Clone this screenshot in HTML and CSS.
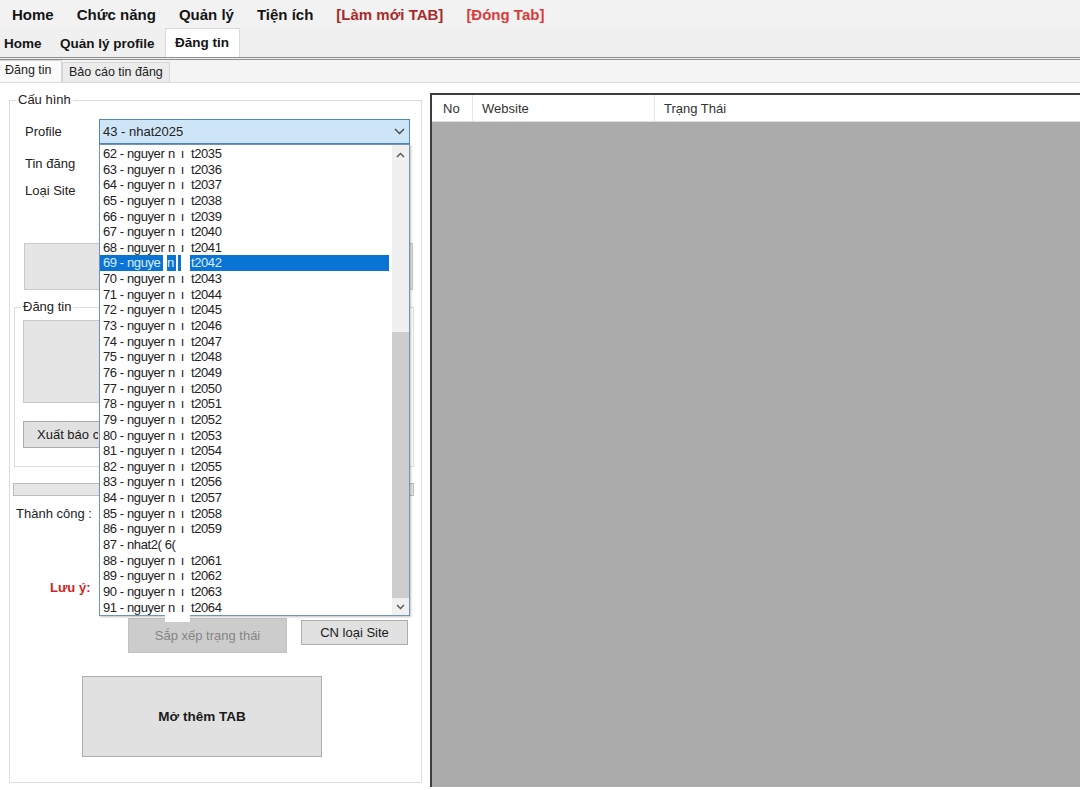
FILE: index.html
```html
<!DOCTYPE html>
<html lang="vi">
<head>
<meta charset="utf-8">
<title>Đăng tin</title>
<link rel="stylesheet" href="styles.css">
</head>
<body>
<div class="menubar">
  <span>Home</span>
  <span>Chức năng</span>
  <span>Quản lý</span>
  <span>Tiện ích</span>
  <span class="red1">[Làm mới TAB]</span>
  <span class="red2">[Đóng Tab]</span>
</div>
<div class="tabs1">
  <div class="t1 t1-home">Home</div>
  <div class="t1 t1-prof">Quản lý profile</div>
  <div class="t1 t1-post active">Đăng tin</div>
</div>
<div class="tabs2">
  <div class="t2 active">Đăng tin</div>
  <div class="t2">Bảo cáo tin đăng</div>
</div>
<div class="content">
  <div class="left">
    <div class="group outer">
      <span class="gtitle">Cấu hình</span>
      <div class="row row1">
        <span class="lbl">Profile</span>
        <div class="combo">
          <span class="combo-val">43 - nhat2025</span>
          <svg class="chev" width="11" height="7" viewBox="0 0 11 7"><polyline points="1,1 5.5,5.5 10,1" fill="none" stroke="#444" stroke-width="1.3"/></svg>
          <div class="dropdown">
            <div class="items">
              <div class="it"><span class="a">62 - nguyer</span><span class="b">n ı</span><span class="c">t2035</span></div>
              <div class="it"><span class="a">63 - nguyer</span><span class="b">n ı</span><span class="c">t2036</span></div>
              <div class="it"><span class="a">64 - nguyer</span><span class="b">n ı</span><span class="c">t2037</span></div>
              <div class="it"><span class="a">65 - nguyer</span><span class="b">n ı</span><span class="c">t2038</span></div>
              <div class="it"><span class="a">66 - nguyer</span><span class="b">n ı</span><span class="c">t2039</span></div>
              <div class="it"><span class="a">67 - nguyer</span><span class="b">n ı</span><span class="c">t2040</span></div>
              <div class="it"><span class="a">68 - nguyer</span><span class="b">n ı</span><span class="c">t2041</span></div>
              <div class="it sel"><span class="sa">69 - nguye</span><span class="wg w1"></span><span class="sn">n</span><span class="wg w2"></span><span class="s3"></span><span class="wg w3"></span><span class="sc">t2042</span></div>
              <div class="it"><span class="a">70 - nguyer</span><span class="b">n ı</span><span class="c">t2043</span></div>
              <div class="it"><span class="a">71 - nguyer</span><span class="b">n ı</span><span class="c">t2044</span></div>
              <div class="it"><span class="a">72 - nguyer</span><span class="b">n ı</span><span class="c">t2045</span></div>
              <div class="it"><span class="a">73 - nguyer</span><span class="b">n ı</span><span class="c">t2046</span></div>
              <div class="it"><span class="a">74 - nguyer</span><span class="b">n ı</span><span class="c">t2047</span></div>
              <div class="it"><span class="a">75 - nguyer</span><span class="b">n ı</span><span class="c">t2048</span></div>
              <div class="it"><span class="a">76 - nguyer</span><span class="b">n ı</span><span class="c">t2049</span></div>
              <div class="it"><span class="a">77 - nguyer</span><span class="b">n ı</span><span class="c">t2050</span></div>
              <div class="it"><span class="a">78 - nguyer</span><span class="b">n ı</span><span class="c">t2051</span></div>
              <div class="it"><span class="a">79 - nguyer</span><span class="b">n ı</span><span class="c">t2052</span></div>
              <div class="it"><span class="a">80 - nguyer</span><span class="b">n ı</span><span class="c">t2053</span></div>
              <div class="it"><span class="a">81 - nguyer</span><span class="b">n ı</span><span class="c">t2054</span></div>
              <div class="it"><span class="a">82 - nguyer</span><span class="b">n ı</span><span class="c">t2055</span></div>
              <div class="it"><span class="a">83 - nguyer</span><span class="b">n ı</span><span class="c">t2056</span></div>
              <div class="it"><span class="a">84 - nguyer</span><span class="b">n ı</span><span class="c">t2057</span></div>
              <div class="it"><span class="a">85 - nguyer</span><span class="b">n ı</span><span class="c">t2058</span></div>
              <div class="it"><span class="a">86 - nguyer</span><span class="b">n ı</span><span class="c">t2059</span></div>
              <div class="it"><span class="a">87 - nhat2( 6(</span></div>
              <div class="it"><span class="a">88 - nguyer</span><span class="b">n ı</span><span class="c">t2061</span></div>
              <div class="it"><span class="a">89 - nguyer</span><span class="b">n ı</span><span class="c">t2062</span></div>
              <div class="it"><span class="a">90 - nguyer</span><span class="b">n ı</span><span class="c">t2063</span></div>
              <div class="it"><span class="a">91 - nguyer</span><span class="b">n ı</span><span class="c">t2064</span></div>
            </div>
            <div class="sbar">
              <div class="sbtn"><svg width="9" height="6" viewBox="0 0 9 6"><polyline points="1,5 4.5,1.5 8,5" fill="none" stroke="#555" stroke-width="1.4"/></svg></div>
              <div class="track"><div class="thumb"></div></div>
              <div class="sbtn"><svg width="9" height="6" viewBox="0 0 9 6"><polyline points="1,1 4.5,4.5 8,1" fill="none" stroke="#555" stroke-width="1.4"/></svg></div>
            </div>
            <div class="mask"></div>
          </div>
        </div>
      </div>
      <div class="row row2"><span class="lbl">Tin đăng</span></div>
      <div class="row row3"><span class="lbl">Loại Site</span></div>
      <div class="graybox box1"></div>
      <div class="group inner">
        <span class="gtitle">Đăng tin</span>
        <div class="graybox box2"></div>
        <div class="btn btn-export"><span class="clip">Xuất báo cáo</span></div>
      </div>
      <div class="progress"></div>
      <div class="status">Thành công :</div>
      <div class="note">Lưu ý:</div>
      <div class="btnrow">
        <div class="btn btn-sort">Sắp xếp trạng thái</div>
        <div class="btn btn-site">CN loại Site</div>
      </div>
      <div class="btn btn-tab">Mở thêm TAB</div>
    </div>
  </div>
  <div class="right">
    <div class="lvhead">
      <div class="col col-no">No</div>
      <div class="col col-web">Website</div>
      <div class="col col-st">Trạng Thái</div>
    </div>
  </div>
</div>
</body>
</html>
```
FILE: styles.css
```css
* { box-sizing: border-box; }
body {
  margin: 0;
  width: 1080px;
  height: 790px;
  overflow: hidden;
  background: #fff;
  color: #1a1a1a;
  font-family: "Liberation Sans", Arial, sans-serif;
}

/* top menu */
.menubar {
  height: 28px;
  background: #f2f2f2;
  display: flex;
  align-items: center;
  gap: 23px;
  padding-left: 12px;
  font-weight: bold;
  font-size: 15px;
  color: #151515;
}
.menubar .red1 { color: #a82a2a; }
.menubar .red2 { color: #d83c3c; }

/* first tab strip */
.tabs1 {
  height: 32px;
  background: #f0f0f0;
  display: flex;
  align-items: flex-end;
  border-bottom: 3px double #8e8e8e;
}
.t1 {
  height: 27px;
  line-height: 27px;
  font-weight: bold;
  font-size: 13.5px;
  color: #151515;
}
.t1-home { width: 55px; padding-left: 4px; }
.t1-prof { width: 110px; padding-left: 5px; }
.t1-post { width: 75px; padding-left: 9px; }
.t1.active {
  height: 29px;
  background: #fff;
  border: 1px solid #dadada;
  border-bottom: none;
}

/* second tab strip */
.tabs2 {
  height: 23px;
  background: #f4f4f4;
  display: flex;
  align-items: flex-end;
  border-bottom: 1px solid #d9d9d9;
}
.t2 {
  height: 20px;
  line-height: 19px;
  padding: 0 6px;
  font-size: 12.5px;
  color: #222;
  background: #ececec;
  border: 1px solid #d6d6d6;
  border-bottom: none;
}
.t2.active {
  height: 22px;
  width: 62px;
  padding: 0 5px;
  background: #fafafa;
  border-left: none;
}

/* content */
.content {
  display: flex;
  height: 707px;
}
.left {
  width: 430px;
  flex: none;
}
.group {
  position: relative;
  border: 1px solid #dcdcdc;
}
.gtitle {
  position: absolute;
  top: -9px;
  left: 6px;
  padding: 0 2px;
  background: #fff;
  font-size: 13px;
  line-height: 16px;
  color: #222;
}
.outer {
  margin: 17px 0 0 9px;
  width: 413px;
  height: 683px;
}
.row {
  display: flex;
  align-items: center;
  height: 25px;
  padding-left: 15px;
}
.row1 { margin-top: 18px; }
.row2 { margin-top: 7px; }
.row3 { margin-top: 2px; }
.lbl {
  width: 74px;
  flex: none;
  font-size: 13px;
  color: #222;
}

/* combobox */
.combo {
  position: relative;
  width: 311px;
  height: 25px;
  background: #cde5f7;
  border: 1px solid #4f88bb;
  display: flex;
  align-items: center;
  padding-left: 3px;
}
.combo-val {
  flex: 1;
  font-size: 13px;
  color: #222;
}
.chev { margin-right: 4px; }

.dropdown {
  position: absolute;
  top: 24px;
  left: -1px;
  width: 311px;
  height: 472px;
  background: #fff;
  border: 1px solid #6f95b8;
  box-shadow: 1px 1px 2px rgba(0, 0, 0, 0.25);
  display: flex;
  z-index: 5;
}
.items {
  width: 292px;
  padding-top: 1px;
}
.it {
  display: flex;
  height: 15.65px;
  line-height: 15.65px;
  font-size: 13px;
  letter-spacing: -0.4px;
  color: #222;
  padding-left: 3px;
  width: 289px;
  white-space: nowrap;
}
.it .a { flex: 0 0 65px; }
.it .b { flex: 0 0 23px; letter-spacing: 1px; }
.it .c { flex: 1; }
.it.sel {
  background: #0a74d4;
  color: #d8ecff;
  padding-left: 0;
}
.sel .sa { flex: 0 0 63px; padding-left: 3px; overflow: hidden; }
.sel .wg { background: #fff; }
.sel .w1 { flex: 0 0 4px; }
.sel .sn { flex: 0 0 9px; }
.sel .w2 { flex: 0 0 2px; }
.sel .s3 { flex: 0 0 3px; }
.sel .w3 { flex: 0 0 9px; }
.sel .sc { flex: 1; padding-left: 1px; }

.sbar {
  width: 17px;
  display: flex;
  flex-direction: column;
  background: #f0f0f0;
}
.sbtn {
  height: 17px;
  display: flex;
  align-items: center;
  justify-content: center;
}
.sbar .sbtn:first-child { padding-top: 3px; }
.track {
  flex: 1;
  display: flex;
  flex-direction: column;
  justify-content: flex-end;
}
.thumb {
  height: 266px;
  background: #cdcdcd;
}
.mask {
  position: absolute;
  left: 65px;
  bottom: -7px;
  width: 25px;
  height: 8px;
  background: #fff;
}

/* boxes and buttons */
.graybox {
  background: #e5e5e5;
  border: 1px solid #c9c9c9;
}
.box1 {
  margin: 40px 0 0 14px;
  width: 389px;
  height: 47px;
}
.inner {
  margin: 17px 0 0 4px;
  width: 400px;
  height: 160px;
}
.box2 {
  margin: 12px 0 0 8px;
  width: 380px;
  height: 83px;
}
.btn {
  display: flex;
  align-items: center;
  justify-content: center;
  font-size: 13px;
  color: #1a1a1a;
  background: #e1e1e1;
  border: 1px solid #adadad;
}
.btn-export {
  margin: 18px 0 0 8px;
  width: 150px;
  height: 27px;
  justify-content: flex-start;
  padding-left: 13px;
}
.clip {
  width: 61px;
  overflow: hidden;
  white-space: nowrap;
}
.progress {
  margin: 16px 0 0 3px;
  width: 401px;
  height: 13px;
  background: #e6e6e6;
  border: 1px solid #bcbcbc;
}
.status {
  margin: 8px 0 0 6px;
  height: 20px;
  line-height: 20px;
  font-size: 13px;
  color: #222;
}
.note {
  margin: 54px 0 0 40px;
  height: 20px;
  line-height: 20px;
  font-size: 13px;
  font-weight: bold;
  color: #d21f1f;
}
.btnrow {
  display: flex;
  align-items: flex-start;
  gap: 14px;
  margin: 20px 0 0 118px;
}
.btn-sort {
  width: 159px;
  height: 35px;
  background: #cccccc;
  border-color: #c2c2c2;
  color: #858585;
}
.btn-site {
  margin-top: 2px;
  width: 107px;
  height: 25px;
}
.btn-tab {
  margin: 23px 0 0 72px;
  width: 240px;
  height: 81px;
  font-weight: bold;
  font-size: 13.5px;
}

/* right list view */
.right {
  flex: 1;
  margin: 10px 0 3px 0;
  background: #ababab;
  border-top: 2px solid #3d3d3d;
  border-left: 2px solid #3d3d3d;
}
.lvhead {
  height: 27px;
  background: #fff;
  display: flex;
  border-bottom: 1px solid #dedede;
  font-size: 13px;
  color: #333;
}
.col {
  display: flex;
  align-items: center;
}
.col-no { width: 41px; padding-left: 11px; border-right: 1px solid #e6e6e6; }
.col-web { width: 182px; padding-left: 9px; border-right: 1px solid #e6e6e6; }
.col-st { flex: 1; padding-left: 9px; }
```
